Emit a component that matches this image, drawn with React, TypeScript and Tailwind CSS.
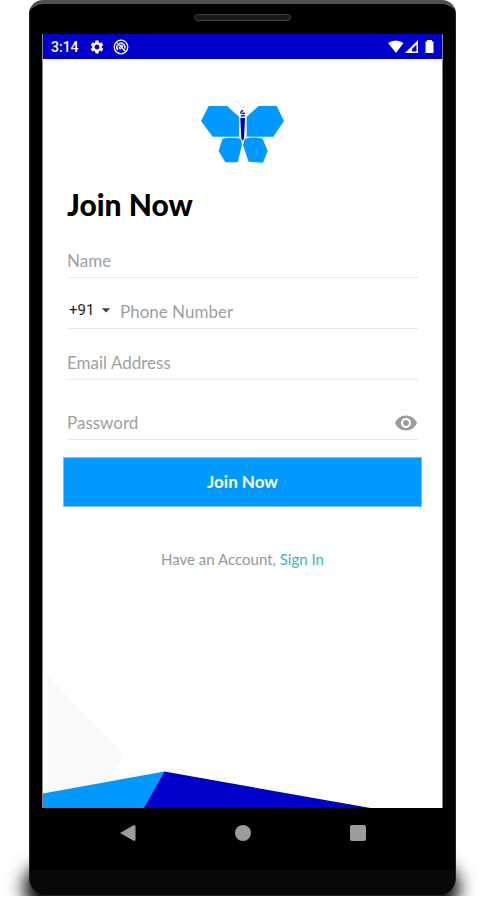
import {useState} from 'react'
import type {ReactNode} from 'react'
import {MdArrowDropDown, MdSettings, MdVisibility, MdVisibilityOff} from 'react-icons/md'

const Row = ({children}: {children: ReactNode}) => (
  <div className="mx-1 flex h-[51px] items-end border-b border-[#e8e8e8] pb-1">{children}</div>
)

type HintInputProps = {
  id: string
  type: string
  label: string
}

// the label acts as the hint and hides once something is typed
const HintInput = ({id, type, label}: HintInputProps) => (
  <div className="grid min-w-0 flex-1 text-[17px] leading-6">
    <input
      id={id}
      type={type}
      placeholder=" "
      className="peer col-start-1 row-start-1 h-6 w-full min-w-0 bg-transparent text-black outline-none"
    />
    <label
      htmlFor={id}
      className="pointer-events-none invisible col-start-1 row-start-1 text-[#9f9f9f] peer-placeholder-shown:visible"
    >
      {label}
    </label>
  </div>
)

const StatusBar = () => (
  <div className="flex h-[25px] items-center justify-between bg-[#0000cc] px-2 font-[Roboto,sans-serif] text-white">
    <div className="flex items-center gap-2">
      <span className="w-[30px] text-sm font-medium">3:14</span>
      <MdSettings className="size-4" />
      {/* sync disabled */}
      <svg className="size-4" viewBox="0 0 16 16" fill="none" stroke="currentColor" aria-hidden="true">
        <circle cx="8" cy="8" r="6.8" strokeWidth="1.3" />
        <path d="M4 4l8 8M4.800 11A4.3 4.3 0 0 1 4.300 6M6 4.300a4.3 4.3 0 0 1 5.700 5.500M7.500 6a2.3 2.3 0 0 1 2.300 2.300M6 8.200a2.3 2.3 0 0 0 2 2" strokeWidth="1.3" />
      </svg>
    </div>
    <svg className="h-4 w-[46px]" viewBox="0 0 46 16" fill="currentColor" aria-hidden="true">
      <path d="M0 4Q7.500-1 15.500 4L8 14Z" />
      <path fillRule="evenodd" d="M30 1v13H17ZM28.500 5.500L24 10v2.500h4.500Z" />
      <path d="M37.500 2.500H39V1h5v1.500h1.500V14h-8V2.500Z" />
    </svg>
  </div>
)

const Logo = () => (
  <svg className="mx-auto h-[65px] w-[84px]" viewBox="62 42 252 195" role="img" aria-label="Butterfly">
    <g fill="#0099ff">
      <path d="M85 63h55l36 32v60H97L62 108Z" />
      <path d="M289 63h-54l-36 32v60h80l32-47Z" />
      <path d="M126 161q28-5 55 0l4 20-13 51h-37l-20-34Z" />
      <path d="M193 161q30-7 54 0l15 37-14 35-43-3-17-49Z" />
    </g>
    <path d="M176 90h22l-3 68-8 18-8-18Z" fill="#eef2ff" />
    <path d="M180 99h14l-3 62-4 6-4-6Z" fill="#0000a8" />
    <path d="M187 74q10 2 7 11t-13 8q-5-9 6-19" fill="#d7dcff" />
    <path d="M188 76q-8 3-6 10M185 85h9M182 93l12-1" fill="none" stroke="#1111bb" strokeWidth="4" />
    <path d="M185 71q-5-17-12-22h-9M189 71q4-17 10-22h7" fill="none" stroke="#c6d7ed" strokeWidth="2" />
  </svg>
)

const JoinForm = () => {
  const [visible, setVisible] = useState(false)

  return (
    <form className="flex flex-col px-5" onSubmit={(e) => e.preventDefault()}>
      <h1 className="mx-1 mt-[22px] text-[30px] leading-9 font-black text-black">Join Now</h1>
      <div className="mt-[5px]">
        <Row>
          <HintInput id="name" type="text" label="Name" />
        </Row>
        <Row>
          <div className="relative mb-0.5 flex shrink-0 items-center">
            <select
              aria-label="Country code"
              className="h-6 w-[53px] appearance-none bg-transparent pl-0.5 font-[Roboto,sans-serif] text-[15px] leading-6 text-[#222222] outline-none"
            >
              <option>+91</option>
              <option>+44</option>
              <option>+1</option>
            </select>
            <MdArrowDropDown className="pointer-events-none absolute right-1 size-5 text-[#444444]" />
          </div>
          <HintInput id="phone" type="tel" label="Phone Number" />
        </Row>
        <Row>
          <HintInput id="email" type="email" label="Email Address" />
        </Row>
      </div>
      <div className="mt-[9px]">
        <Row>
          <HintInput id="password" type={visible ? 'text' : 'password'} label="Password" />
          <button
            type="button"
            aria-label="Toggle password"
            className="shrink-0 text-[#9c9c9c]"
            onClick={() => setVisible(!visible)}
          >
            {visible ? <MdVisibilityOff className="size-6" /> : <MdVisibility className="size-6" />}
          </button>
        </Row>
      </div>
      <button type="submit" className="mt-[17px] h-[50px] border border-[#8cb8f2] bg-[#0099ff] text-[17px] font-bold text-white">
        Join Now
      </button>
      <p className="mt-[42px] text-center text-[15px] leading-5 text-[#989898]">
        Have an Account,{' '}
        <a href="#sign-in" className="text-[#35b8c8]">
          Sign In
        </a>
      </p>
    </form>
  )
}

const BottomArt = () => (
  <svg className="mt-auto block w-full" viewBox="0 0 401 134" aria-hidden="true">
    <path d="M4 0L81 80 50 134H4Z" fill="#f9f9f9" />
    <path d="M0 119L122 97 101 134H0Z" fill="#0099ff" />
    <path d="M122 97L331 134H101Z" fill="#0000cc" />
  </svg>
)

const NavBar = () => (
  <nav className="flex h-[50px] items-center justify-around px-10 text-[#9b9b9b]">
    <button type="button" aria-label="Back">
      <svg className="size-4" viewBox="0 0 16 16" fill="currentColor">
        <path d="M0 8L13.500 0.300Q15.500-0.300 15.500 1.500v13Q15.500 16.300 13.500 15.700Z" />
      </svg>
    </button>
    <button type="button" aria-label="Home" className="size-4 rounded-full bg-[#9b9b9b]" />
    <button type="button" aria-label="Recent apps" className="size-4 rounded-xs bg-[#9b9b9b]" />
  </nav>
)

export default function App() {
  return (
    <div className="flex min-h-screen flex-col bg-white pb-1 font-[Lato,sans-serif]">
      <div className="relative isolate flex flex-1 flex-col overflow-hidden pr-[27px] pl-[29px]">
        {/* floor shadow */}
        <div className="absolute inset-x-6 -bottom-4 -z-10 h-12 rounded-full bg-black blur-[9px]" />
        <div className="flex flex-1 flex-col rounded-t-[14px] rounded-b-[18px] border border-t-4 border-[#202020] border-t-[#505050] bg-black">
          <div className="flex h-[30px] justify-center pt-2.5">
            <div className="h-[7px] w-[97px] rounded-full border border-[#414141] bg-[#181818]" />
          </div>
          <main className="mx-3 flex flex-1 flex-col border-x border-[#888888] bg-white">
            <StatusBar />
            <div className="pt-10">
              <Logo />
            </div>
            <JoinForm />
            <BottomArt />
          </main>
          <NavBar />
          <div className="mt-3 h-[25px] rounded-b-[17px] bg-[#080808]" />
        </div>
      </div>
    </div>
  )
}
